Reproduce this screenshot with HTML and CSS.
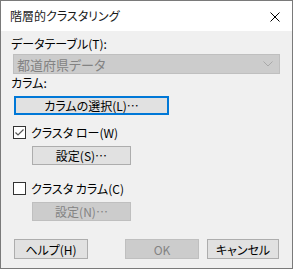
FILE: index.html
```html
<!DOCTYPE html>
<html lang="ja">
  <head>
    <meta charset="UTF-8" />
    <title>階層的クラスタリング</title>
    <link rel="stylesheet" href="styles.css">
  </head>
  <body>
    <div class="dialog">
      <div class="titlebar">
        <span class="title">階層的クラスタリング</span>
        <svg class="close" width="10" height="10" viewBox="0 0 10 10">
          <path d="M0.5 0.5 L9.5 9.5 M9.5 0.5 L0.5 9.5" stroke="#000" stroke-width="1" fill="none" />
        </svg>
      </div>

      <div class="content">
        <div class="label">データテーブル(T):</div>
        <div class="combo">
          <span>都道府県データ</span>
          <svg width="10" height="6" viewBox="0 0 10 6">
            <path d="M0.5 0.5 L5 5 L9.5 0.5" stroke="#a9a9a9" stroke-width="1" fill="none" />
          </svg>
        </div>

        <div class="label label-col">カラム:</div>
        <button class="btn btn-focus">カラムの選択(L)…</button>

        <label class="check check-first">
          <span class="box">
            <svg width="11" height="11" viewBox="0 0 11 11">
              <path d="M1.5 5.5 L4 8 L9.5 2.5" stroke="#555" stroke-width="1.2" fill="none" />
            </svg>
          </span>
          クラスタ ロー(W)
        </label>
        <button class="btn btn-sub">設定(S)…</button>

        <label class="check">
          <span class="box"></span>
          クラスタ カラム(C)
        </label>
        <button class="btn btn-sub" disabled>設定(N)…</button>

        <div class="footer">
          <button class="btn btn-foot">ヘルプ(H)</button>
          <div class="footer-right">
            <button class="btn btn-foot" disabled>OK</button>
            <button class="btn btn-foot btn-cancel">キャンセル</button>
          </div>
        </div>
      </div>
    </div>
  </body>
</html>
```

FILE: styles.css
```css
body {
  margin: 0;
  font-family: "Noto Sans CJK JP", "Noto Sans", sans-serif;
  font-size: 12px;
  font-feature-settings: "palt";
  color: #000;
}

.dialog {
  width: 291px;
  height: 267px;
  border: 1px solid #7a7a7a;
  background-color: #f0f0f0;
}

.titlebar {
  height: 30px;
  background-color: #fff;
  display: flex;
  align-items: center;
  justify-content: space-between;
  padding: 0 12px 0 9px;
}

.title {
  color: #1a1a1a;
  padding-bottom: 1px;
}

.close {
  margin-top: 1px;
}

.content {
  padding: 5px 0 0 10px;
}

.label {
  height: 16px;
  line-height: 16px;
}

.combo {
  width: 265px;
  height: 18px;
  margin: 2px 0 0 2px;
  background-color: #cccccc;
  border: 1px solid #bfbfbf;
  color: #838383;
  font-size: 13px;
  display: flex;
  align-items: center;
  justify-content: space-between;
  padding: 0 6px 0 3px;
  box-sizing: content-box;
  width: 256px;
}

.label-col {
  margin-top: 1px;
}

.btn {
  display: block;
  font-family: inherit;
  font-size: 12px;
  font-feature-settings: "palt";
  height: 19px;
  padding: 0;
  line-height: 15px;
  background-color: #e1e1e1;
  border: 1px solid #adadad;
  color: #000;
  box-sizing: border-box;
}

.btn:disabled {
  background-color: #cccccc;
  border-color: #bfbfbf;
  color: #838383;
}

.btn-focus {
  width: 155px;
  margin: 5px 0 0 3px;
  border: 2px solid #0078d7;
}

.check {
  display: flex;
  align-items: center;
  height: 17px;
  margin: 10px 0 0 2px;
  gap: 5px;
}

.check-first {
  margin-top: 9px;
}

.check + .btn {
  margin-top: 5px;
}

.check:not(.check-first) {
  margin-top: 15px;
}

.box {
  width: 11px;
  height: 11px;
  border: 1px solid #333;
  background-color: #fff;
  display: flex;
}

.btn-sub {
  width: 99px;
  margin-left: 21px;
}

.footer {
  display: flex;
  justify-content: space-between;
  margin: 18px 0 0 3px;
  width: 265px;
}

.footer-right {
  display: flex;
  gap: 8px;
}

.btn-foot {
  width: 74px;
  height: 20px;
}

.btn-cancel {
  width: 72px;
}
```
